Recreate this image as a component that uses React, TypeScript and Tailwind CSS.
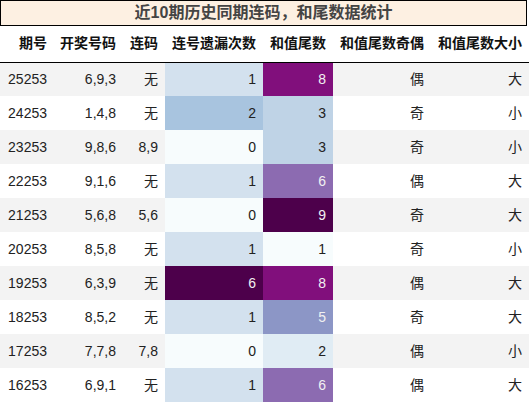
import React from "react";

const c3: Record<string, string> = {
  "0": "bg-[#f7fcfd] text-[#222]",
  "1": "bg-[#d3e1ee] text-[#222]",
  "2": "bg-[#a8c4df] text-[#222]",
  "6": "bg-[#4d004b] text-[#f1f1f1]",
};
const c4: Record<string, string> = {
  "1": "bg-[#f7fcfd] text-[#222]",
  "2": "bg-[#e0ecf4] text-[#222]",
  "3": "bg-[#bfd3e6] text-[#222]",
  "5": "bg-[#8c96c6] text-[#f1f1f1]",
  "6": "bg-[#8c6bb1] text-[#f1f1f1]",
  "8": "bg-[#810f7c] text-[#f1f1f1]",
  "9": "bg-[#4d004b] text-[#f1f1f1]",
};

const rows: string[][] = [
  ["25253", "6,9,3", "无", "1", "8", "偶", "大"],
  ["24253", "1,4,8", "无", "2", "3", "奇", "小"],
  ["23253", "9,8,6", "8,9", "0", "3", "奇", "小"],
  ["22253", "9,1,6", "无", "1", "6", "偶", "大"],
  ["21253", "5,6,8", "5,6", "0", "9", "奇", "大"],
  ["20253", "8,5,8", "无", "1", "1", "奇", "小"],
  ["19253", "6,3,9", "无", "6", "8", "偶", "大"],
  ["18253", "8,5,2", "无", "1", "5", "奇", "大"],
  ["17253", "7,7,8", "7,8", "0", "2", "偶", "小"],
  ["16253", "6,9,1", "无", "1", "6", "偶", "大"],
];

const headers = ["期号", "开奖号码", "连码", "连号遗漏次数", "和值尾数", "和值尾数奇偶", "和值尾数大小"];
const widths = ["w-[54px]", "w-[69px]", "w-[42px]", "w-[98px]", "w-[70px]", "w-[98px]", "w-[98px]"];

export default function App() {
  return (
    <div
      className="w-[530px] h-[403px] bg-white overflow-hidden"
      style={{ fontFamily: '"Liberation Sans", "Noto Sans CJK SC", sans-serif' }}
    >
      <div className="w-[527px] h-[26px] border border-black bg-[#fdf0e2] flex items-center justify-center text-[16px] font-bold text-[#444]">
        近10期历史同期连码，和尾数据统计
      </div>
      <table className="w-[529px] border-collapse table-fixed">
        <colgroup>
          {widths.map((w, i) => (
            <col key={i} className={w} />
          ))}
        </colgroup>
        <thead>
          <tr className="h-[36px] border-b border-black">
            {headers.map((h, i) => (
              <th key={i} className="text-right pl-0 pr-[7px] py-0 text-[14px] font-bold text-[#111] whitespace-nowrap">
                {h}
              </th>
            ))}
          </tr>
        </thead>
        <tbody>
          {rows.map((r, ri) => (
            <tr key={ri} className={`h-[34px] ${ri % 2 === 0 ? "bg-[#f3f3f3]" : "bg-white"}`}>
              {r.map((v, ci) => {
                let cls = "text-[#222]";
                if (ci === 3) cls = c3[v];
                if (ci === 4) cls = c4[v];
                return (
                  <td key={ci} className={`text-right pl-0 pr-[7px] py-0 text-[14px] whitespace-nowrap ${cls}`}>
                    {v}
                  </td>
                );
              })}
            </tr>
          ))}
        </tbody>
      </table>
    </div>
  );
}
